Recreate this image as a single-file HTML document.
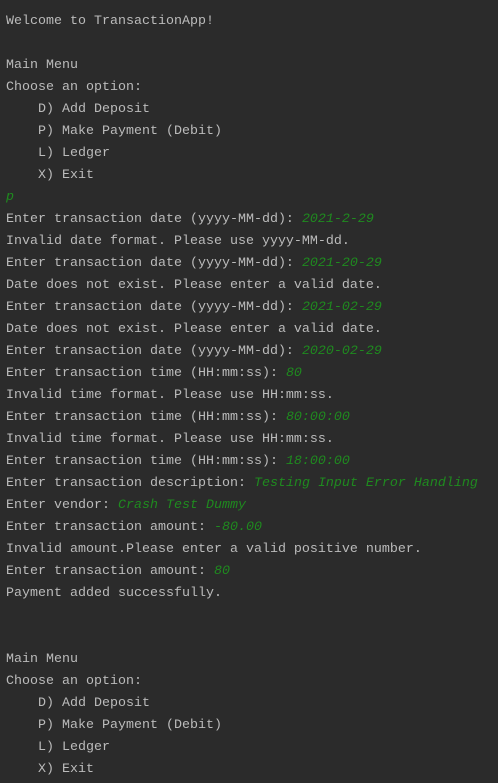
<!DOCTYPE html>
<html><head><meta charset="utf-8"><style>
html,body{margin:0;padding:0;background:#2b2b2b;width:498px;height:783px;overflow:hidden}
pre{margin:0;padding:11px 0 0 6px;font-family:"Liberation Mono",monospace;font-size:13.33px;line-height:22px;color:#bbbbbb;white-space:pre}
i{color:#1f8a1f;font-style:italic}
.c{display:inline-block;width:1px;height:14px;background:#bbb;vertical-align:middle}
</style></head><body><pre>Welcome to TransactionApp!

Main Menu
Choose an option:
    D) Add Deposit
    P) Make Payment (Debit)
    L) Ledger
    X) Exit
<i>p</i>
Enter transaction date (yyyy-MM-dd): <i>2021-2-29</i>
Invalid date format. Please use yyyy-MM-dd.
Enter transaction date (yyyy-MM-dd): <i>2021-20-29</i>
Date does not exist. Please enter a valid date.
Enter transaction date (yyyy-MM-dd): <i>2021-02-29</i>
Date does not exist. Please enter a valid date.
Enter transaction date (yyyy-MM-dd): <i>2020-02-29</i>
Enter transaction time (HH:mm:ss): <i>80</i>
Invalid time format. Please use HH:mm:ss.
Enter transaction time (HH:mm:ss): <i>80:00:00</i>
Invalid time format. Please use HH:mm:ss.
Enter transaction time (HH:mm:ss): <i>18:00:00</i>
Enter transaction description: <i>Testing Input Error Handling</i>
Enter vendor: <i>Crash Test Dummy</i>
Enter transaction amount: <i>-80.00</i>
Invalid amount.Please enter a valid positive number.
Enter transaction amount: <i>80</i>
Payment added successfully.


Main Menu
Choose an option:
    D) Add Deposit
    P) Make Payment (Debit)
    L) Ledger
    X) Exit
<span class="c"></span></pre></body></html>
